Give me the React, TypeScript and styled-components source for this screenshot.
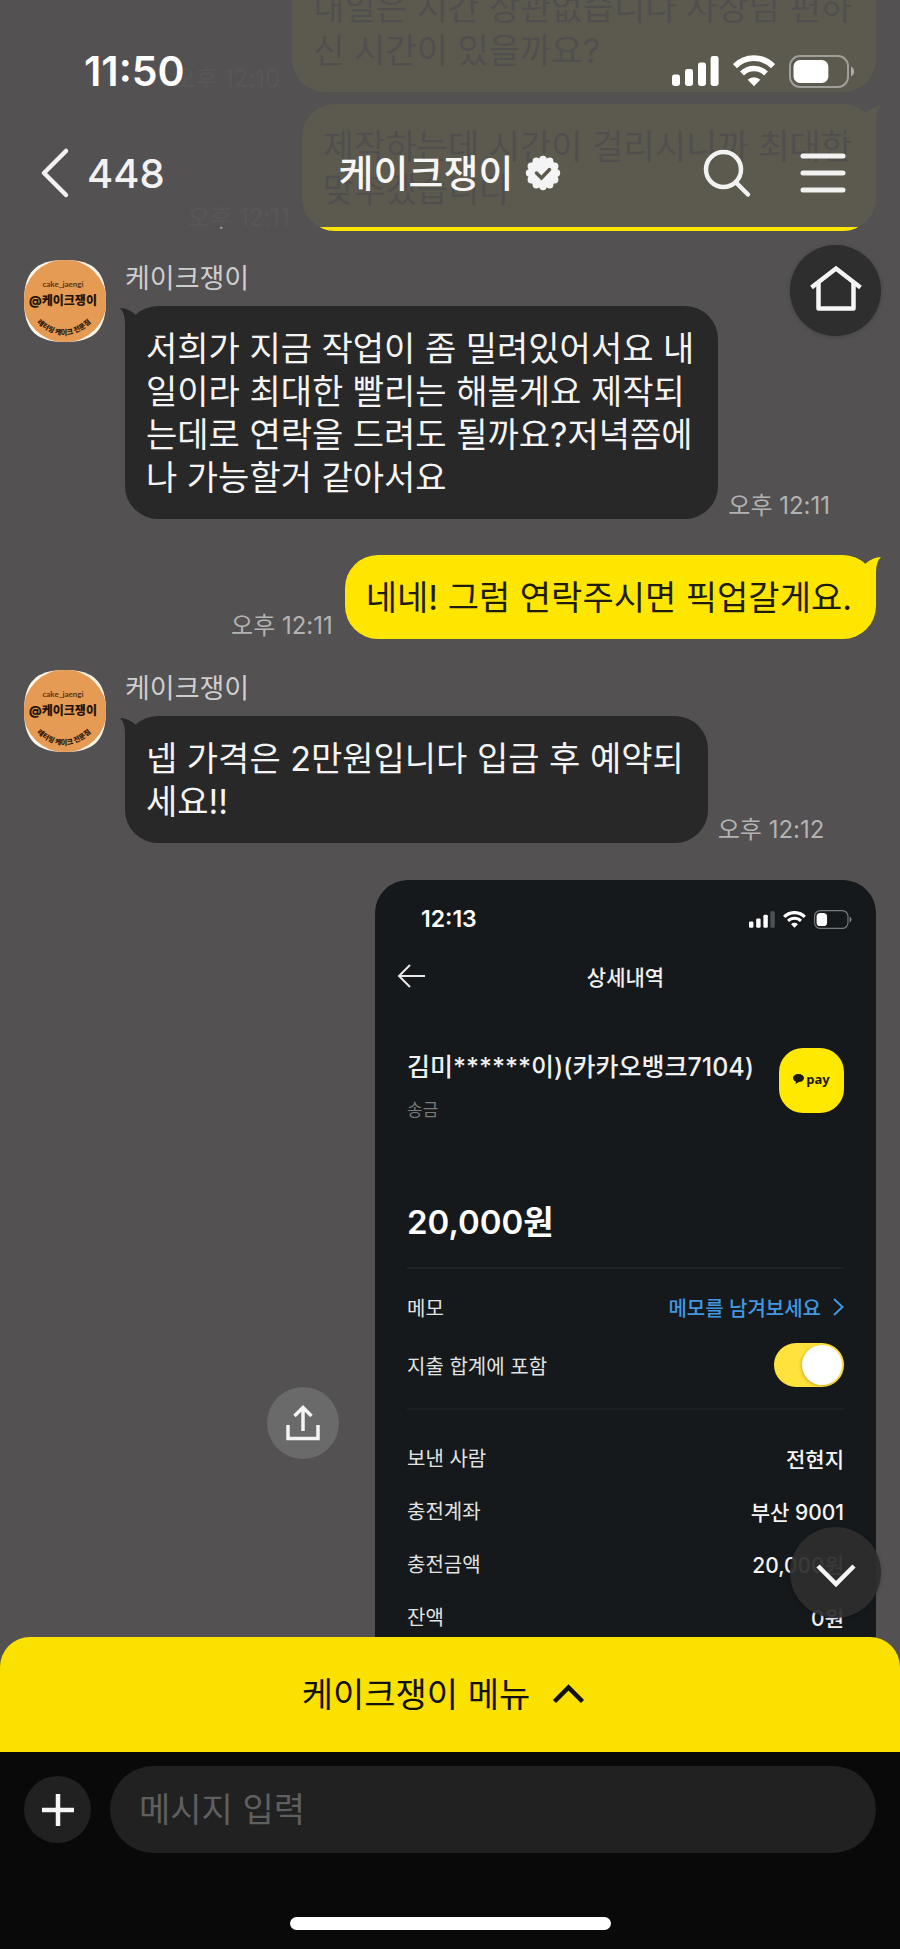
import React from "react";
import styled, { createGlobalStyle, css } from "styled-components";

const GlobalStyle = createGlobalStyle`
  *, *::before, *::after { box-sizing: border-box; }
  body {
    margin: 0;
    background: #535152;
    font-family: Inter, "Noto Sans CJK KR", sans-serif;
  }
  button, input { font-family: inherit; }
`;

/* ---------- page ---------- */

const Page = styled.div`
  position: relative;
  display: flex;
  flex-direction: column;
  height: 100vh;
  overflow: hidden;
  background: #535152;
`;

const iconButton = css`
  display: flex;
  align-items: center;
  justify-content: center;
  padding: 0;
  border: 0;
  background: none;
  color: #f2f2f2;
  cursor: pointer;
`;

/* ---------- header ---------- */

const Header = styled.header`
  position: absolute;
  top: 0;
  left: 0;
  right: 0;
  z-index: 2;
  padding: 41px 0 14px;
  background: rgba(83, 81, 82, 0.95);
`;

const StatusBar = styled.div`
  display: flex;
  align-items: center;
  justify-content: space-between;
  height: 60px;
  padding: 0 45px 0 84px;
`;

const Clock = styled.time`
  font-size: 41px;
  font-weight: 600;
  color: #fff;
`;

const StatusIcons = styled.div`
  display: flex;
  align-items: center;
  gap: 14px;
`;

const NavBar = styled.div`
  display: grid;
  grid-template-columns: 1fr auto 1fr;
  align-items: center;
  height: 80px;
  margin-top: 32px;
  padding: 0 52px 0 38px;
`;

const BackButton = styled.button`
  ${iconButton}
  justify-self: start;
  gap: 15px;
  font-size: 40px;
  font-weight: 500;
`;

const Title = styled.h1`
  display: flex;
  align-items: center;
  gap: 12px;
  margin: 0;
  padding-left: 14px;
  font-size: 38px;
  font-weight: 500;
  line-height: 56px;
  color: #f6f6f6;
`;

const NavActions = styled.div`
  display: flex;
  justify-self: end;
  gap: 46px;
`;

const IconButton = styled.button`
  ${iconButton}
`;

/* ---------- conversation ---------- */

const Stage = styled.main`
  position: relative;
  flex: 1;
  min-height: 0;
  margin-bottom: -30px;
  overflow: hidden;
`;

const Conversation = styled.div`
  display: flex;
  flex-direction: column;
  margin-top: -35px;
  padding: 0 24px;
`;

const Outgoing = styled.div<{ $gap: number }>`
  display: flex;
  flex-direction: row-reverse;
  align-items: flex-end;
  gap: 12px;
  margin-top: ${(p) => p.$gap}px;
`;

const Incoming = styled.div<{ $gap: number }>`
  display: grid;
  grid-template-columns: 82px 1fr;
  gap: 19px;
  margin-top: ${(p) => p.$gap}px;
`;

const Sender = styled.div`
  padding-top: 2px;
  margin-bottom: 10px;
  font-size: 27px;
  line-height: 34px;
  color: #cfcecf;
`;

const BubbleLine = styled.div`
  display: flex;
  align-items: flex-end;
  gap: 10px;
`;

const BubbleBox = styled.div<{ $mine?: boolean }>`
  position: relative;
  padding: 21px 24px 20px 21px;
  border-radius: 33px;
  background: ${(p) => (p.$mine ? "#ffe600" : "#282828")};
  color: ${(p) => (p.$mine ? "#1e1c0c" : "#f4f4f4")};
  font-size: 34px;
  line-height: 43px;
`;

const TextLine = styled.span`
  display: block;
  white-space: nowrap;
`;

const Tail = styled.svg<{ $mine?: boolean }>`
  position: absolute;
  top: 0;
  ${(p) => (p.$mine ? "right: -5px; transform: scaleX(-1);" : "left: -5px;")}
`;

const SentAt = styled.time`
  font-size: 24px;
  line-height: 26px;
  white-space: nowrap;
  color: #b4b3b3;
`;

const PhotoLine = styled.div`
  display: flex;
  align-items: center;
  justify-content: flex-end;
  gap: 36px;
  margin-top: 37px;
`;

const ShareButton = styled.button`
  ${iconButton}
  width: 72px;
  height: 72px;
  border-radius: 50%;
  background: #6b6a6a;
`;

const FloatingButton = styled.button<{ $place: "top" | "bottom" }>`
  ${iconButton}
  position: absolute;
  right: 19px;
  ${(p) => (p.$place === "top" ? "top: 245px;" : "bottom: 49px;")}
  width: 91px;
  height: 91px;
  border-radius: 50%;
  background: ${(p) => (p.$place === "top" ? "#2e2e2e" : "rgba(46, 46, 46, 0.94)")};
  box-shadow: 0 1px 4px rgba(0, 0, 0, 0.2);
`;

/* ---------- transfer receipt ---------- */

const Receipt = styled.article`
  width: 60%;
  max-width: 501px;
  aspect-ratio: 501 / 1085;
  padding: 24px 32px 0;
  border-radius: 33px;
  background: #15191b;
  color: #e2e3e3;
  font-size: 20px;
`;

const ReceiptStatus = styled.div`
  display: flex;
  align-items: center;
  justify-content: space-between;
  height: 30px;
  margin: 0 -8px 0 14px;
`;

const ReceiptClock = styled.time`
  font-size: 23px;
  font-weight: 600;
  color: #fff;
`;

const ReceiptIcons = styled.div`
  display: flex;
  align-items: center;
  gap: 8px;
`;

const ReceiptNav = styled.div`
  display: grid;
  grid-template-columns: 1fr auto 1fr;
  align-items: center;
  height: 40px;
  margin: 22px -10px 0;
`;

const ReceiptTitle = styled.h2`
  margin: 0;
  font-size: 21px;
  font-weight: 500;
  color: #f0f0f0;
`;

const Payee = styled.div`
  display: flex;
  justify-content: space-between;
  margin-top: 52px;
`;

const PayeeName = styled.div`
  font-size: 25px;
  font-weight: 500;
  line-height: 38px;
  white-space: nowrap;
  color: #f0f0f0;
`;

const PayeeKind = styled.div`
  margin-top: 12px;
  font-size: 17px;
  line-height: 24px;
  color: #77797a;
`;

const PayBadge = styled.div`
  display: flex;
  align-items: center;
  justify-content: center;
  gap: 2px;
  width: 65px;
  height: 65px;
  padding-bottom: 4px;
  border-radius: 24px;
  background: #ffe900;
  color: #1d1b16;
  font-family: "Open Sans", sans-serif;
  font-size: 13px;
  font-weight: 700;
`;

const Amount = styled.div`
  margin-top: 76px;
  font-size: 33px;
  font-weight: 600;
  line-height: 48px;
  color: #fff;
`;

const Divider = styled.hr`
  height: 2px;
  margin: 21px 0 0;
  border: 0;
  background: #1d2124;
`;

const Settings = styled.div`
  display: flex;
  flex-direction: column;
  gap: 14px;
  margin-top: 16px;
`;

const SettingRow = styled.div`
  display: flex;
  align-items: center;
  justify-content: space-between;
  height: 44px;
`;

const MemoLink = styled.a`
  display: flex;
  align-items: center;
  gap: 12px;
  color: #4298e0;
  font-weight: 500;
  text-decoration: none;
`;

const Toggle = styled.input`
  appearance: none;
  display: flex;
  align-items: center;
  justify-content: flex-end;
  width: 70px;
  height: 44px;
  margin: 0;
  padding: 2px;
  border-radius: 22px;
  background: #ffe23c;

  &::before {
    content: "";
    width: 40px;
    height: 40px;
    border-radius: 50%;
    background: #fff;
    box-shadow: -1px 1px 3px rgba(120, 90, 0, 0.35);
  }

  &:not(:checked) {
    justify-content: flex-start;
    background: #44484b;
  }
`;

const Details = styled.dl`
  margin: 21px 0 0;
`;

const DetailRow = styled.div`
  display: flex;
  align-items: center;
  justify-content: space-between;
  height: 53px;
`;

const DetailValue = styled.dd`
  margin: 0;
  font-size: 21px;
  font-weight: 500;
  color: #f4f4f4;
`;

/* ---------- footer ---------- */

const Footer = styled.footer`
  position: relative;
  z-index: 2;
`;

const MenuButton = styled.button`
  ${iconButton}
  gap: 20px;
  width: 100%;
  height: 115px;
  padding: 0 12px 4px 0;
  border-radius: 30px 30px 0 0;
  background: #fae100;
  color: #111;
  font-size: 34px;
`;

const Dock = styled.div`
  display: flex;
  flex-direction: column;
  align-items: center;
  padding: 14px 24px 19px;
  background: #090909;
`;

const Composer = styled.form`
  display: flex;
  align-items: center;
  gap: 19px;
  width: 100%;
`;

const AddButton = styled.button`
  ${iconButton}
  flex: none;
  width: 67px;
  height: 67px;
  border-radius: 50%;
  background: #212121;
`;

const MessageInput = styled.input`
  flex: 1;
  min-width: 0;
  height: 87px;
  padding: 0 29px;
  border: 0;
  border-radius: 44px;
  outline: 0;
  background: #212121;
  color: #f2f2f2;
  font-size: 34px;

  &::placeholder {
    color: #5f5f5f;
    opacity: 1;
  }
`;

const HomeIndicator = styled.div`
  width: 321px;
  max-width: 60%;
  height: 13px;
  margin-top: 64px;
  border-radius: 7px;
  background: #fff;
`;

/* ---------- drawings ---------- */

const Signal = ({ size, weak }: { size: number; weak?: boolean }) => (
  <svg width={size} height={Math.round((size * 30) / 47)} viewBox="0 0 47 30" fill="#fff" aria-hidden="true">
    <rect x="0" y="18.5" width="8" height="11.5" rx="2.4" />
    <rect x="13" y="13" width="8" height="17" rx="2.4" />
    <rect x="26" y="6.5" width="8" height="23.5" rx="2.4" />
    <rect x="38.6" y="0" width="8" height="30" rx="2.4" opacity={weak ? 0.25 : 1} />
  </svg>
);

const Wifi = ({ size }: { size: number }) => (
  <svg width={size} height={Math.round((size * 30) / 40)} viewBox="0 0 40 30" fill="none" stroke="#fff" aria-hidden="true">
    <path d="M1.8 10.4 A25.5 25.5 0 0 1 38.2 10.4" strokeWidth="5.6" />
    <path d="M8.6 17.4 A16 16 0 0 1 31.4 17.4" strokeWidth="5.2" />
    <path d="M20 29.5 L14 23.4 A8.5 8.5 0 0 1 26 23.4 Z" fill="#fff" stroke="none" />
  </svg>
);

const Battery = ({ size, level }: { size: number; level: number }) => (
  <svg width={size} height={Math.round(size / 2)} viewBox="0 0 66 33" fill="none" aria-hidden="true">
    <rect x="1" y="1" width="58" height="31" rx="10" stroke="#fff" strokeOpacity="0.42" strokeWidth="2" />
    <path d="M62 11.5 a5.6 5.6 0 0 1 0 10 Z" fill="#fff" fillOpacity="0.5" />
    <rect x="4.5" y="5" width={52 * level} height="23" rx="6.5" fill="#fff" />
  </svg>
);

const badgePoints = Array.from({ length: 12 }, (_, i) => {
  const a = (i * Math.PI) / 6;
  return { x: 18 + 13.5 * Math.cos(a), y: 18 + 13.5 * Math.sin(a) };
});

const VerifiedBadge = () => (
  <svg width="36" height="36" viewBox="0 0 36 36" role="img" aria-label="인증됨">
    <g fill="#f4f4f4">
      <circle cx="18" cy="18" r="15" />
      {badgePoints.map((p, i) => (
        <circle key={i} cx={p.x} cy={p.y} r="3.7" />
      ))}
    </g>
    <path d="M11.5 18 L16.5 23 L24.5 14.5" fill="none" stroke="#5c594c" strokeWidth="3.5" strokeLinecap="round" />
  </svg>
);

const Avatar = ({ id }: { id: string }) => (
  <svg width="82" height="82" viewBox="0 0 82 82" role="img" aria-label="케이크쟁이 프로필">
    <defs>
      <clipPath id={`${id}-clip`}>
        <path d="M41 0 C70 0 82 12 82 41 C82 70 70 82 41 82 C12 82 0 70 0 41 C0 12 12 0 41 0 Z" />
      </clipPath>
      <path id={`${id}-arc`} d="M10 60 Q40 90 70 60" />
    </defs>
    <g clipPath={`url(#${id}-clip)`}>
      <rect width="82" height="82" fill="#fdf6ea" />
      <circle cx="41" cy="41" r="41.5" fill="#e59b54" />
    </g>
    <text x="39" y="27" textAnchor="middle" fontFamily="Lato, sans-serif" fontSize="8" fontWeight="700" fill="#5a3417">
      cake_jaengi
    </text>
    <text x="39" y="45" textAnchor="middle" fontSize="12" fontWeight="900" fill="#24130a">
      @케이크쟁이
    </text>
    <text fontSize="7" fontWeight="800" fill="#2d180c" textAnchor="middle">
      <textPath href={`#${id}-arc`} startOffset="50%">
        레터링 케이크 전문점
      </textPath>
    </text>
  </svg>
);

/* ---------- parts ---------- */

const Bubble = ({ lines, mine, tail = true }: { lines: string[]; mine?: boolean; tail?: boolean }) => (
  <BubbleBox $mine={mine}>
    {tail && (
      <Tail $mine={mine} width="38" height="33" viewBox="-5 0 38 33" aria-hidden="true">
        <path d="M-5 2 Q3 2 11 9 L33 33 L0 33 L0 17 Q0 7 -5 2 Z" fill={mine ? "#ffe600" : "#282828"} />
      </Tail>
    )}
    {lines.map((line) => (
      <TextLine key={line}>{line}</TextLine>
    ))}
  </BubbleBox>
);

const ShopMessage = ({ id, gap, lines, time }: { id: string; gap: number; lines: string[]; time: string }) => (
  <Incoming $gap={gap}>
    <Avatar id={id} />
    <div>
      <Sender>케이크쟁이</Sender>
      <BubbleLine>
        <Bubble lines={lines} />
        <SentAt>{time}</SentAt>
      </BubbleLine>
    </div>
  </Incoming>
);

const details = [
  ["보낸 사람", "전현지"],
  ["충전계좌", "부산 9001"],
  ["충전금액", "20,000원"],
  ["잔액", "0원"],
];

const TransferReceipt = () => (
  <Receipt>
    <ReceiptStatus>
      <ReceiptClock>12:13</ReceiptClock>
      <ReceiptIcons>
        <Signal size={26} weak />
        <Wifi size={23} />
        <Battery size={38} level={0.35} />
      </ReceiptIcons>
    </ReceiptStatus>
    <ReceiptNav>
      <svg width="30" height="26" viewBox="0 0 30 26" fill="none" stroke="#e8e8e8" strokeWidth="2" aria-hidden="true">
        <path d="M28 13 H3 M13 2 L2 13 L13 24" />
      </svg>
      <ReceiptTitle>상세내역</ReceiptTitle>
    </ReceiptNav>
    <Payee>
      <div>
        <PayeeName>김미******이)(카카오뱅크7104)</PayeeName>
        <PayeeKind>송금</PayeeKind>
      </div>
      <PayBadge>
        <svg width="11" height="11" viewBox="0 0 11 11" fill="#1d1b16" aria-hidden="true">
          <path d="M5.5 1 C8.6 1 11 2.8 11 5.1 C11 7.4 8.6 9.2 5.5 9.2 L2.5 11 L3 8.7 C1.2 8 0 6.7 0 5.1 C0 2.8 2.4 1 5.5 1 Z" />
        </svg>
        pay
      </PayBadge>
    </Payee>
    <Amount>20,000원</Amount>
    <Divider />
    <Settings>
      <SettingRow>
        <span>메모</span>
        <MemoLink href="#memo">
          메모를 남겨보세요
          <svg width="11" height="18" viewBox="0 0 11 18" fill="none" stroke="#4298e0" strokeWidth="2" aria-hidden="true">
            <path d="M1 1 L9.5 9 L1 17" />
          </svg>
        </MemoLink>
      </SettingRow>
      <SettingRow>
        <label htmlFor="include-in-total">지출 합계에 포함</label>
        <Toggle id="include-in-total" type="checkbox" defaultChecked />
      </SettingRow>
    </Settings>
    <Divider />
    <Details>
      {details.map(([name, value]) => (
        <DetailRow key={name}>
          <dt>{name}</dt>
          <DetailValue>{value}</DetailValue>
        </DetailRow>
      ))}
    </Details>
  </Receipt>
);

export default function App() {
  return (
    <>
      <GlobalStyle />
      <Page>
        <Header>
          <StatusBar>
            <Clock>11:50</Clock>
            <StatusIcons>
              <Signal size={47} />
              <Wifi size={42} />
              <Battery size={66} level={0.67} />
            </StatusIcons>
          </StatusBar>
          <NavBar>
            <BackButton type="button" aria-label="뒤로, 읽지 않음 448">
              <svg width="34" height="52" viewBox="0 0 34 52" fill="none" stroke="#f2f2f2" strokeWidth="4.5" strokeLinecap="round" strokeLinejoin="round" aria-hidden="true">
                <path d="M28 4 L6 26 L28 48" />
              </svg>
              448
            </BackButton>
            <Title>
              케이크쟁이
              <VerifiedBadge />
            </Title>
            <NavActions>
              <IconButton type="button" aria-label="검색">
                <svg width="50" height="50" viewBox="0 0 50 50" fill="none" stroke="#f2f2f2" strokeWidth="4.5" strokeLinecap="round" aria-hidden="true">
                  <circle cx="21.5" cy="21.5" r="17.5" />
                  <path d="M34 34.5 L46 46.5" />
                </svg>
              </IconButton>
              <IconButton type="button" aria-label="메뉴">
                <svg width="50" height="50" viewBox="0 0 50 50" fill="none" stroke="#f2f2f2" strokeWidth="5" strokeLinecap="round" aria-hidden="true">
                  <path d="M5 8 H45 M5 25 H45 M5 42 H45" />
                </svg>
              </IconButton>
            </NavActions>
          </NavBar>
        </Header>

        <Stage>
          <Conversation>
            <Outgoing $gap={0}>
              <Bubble mine tail={false} lines={["내일은 시간 상관없습니다 사장님 편하", "신 시간이 있을까요?"]} />
              <SentAt>오후 12:10</SentAt>
            </Outgoing>
            <Outgoing $gap={12}>
              <Bubble mine lines={["제작하는데 시간이 걸리시니까 최대한", "맞추겠습니다"]} />
              <SentAt>오후 12:11</SentAt>
            </Outgoing>
            <ShopMessage
              id="shop-a"
              gap={29}
              lines={[
                "저희가 지금 작업이 좀 밀려있어서요 내",
                "일이라 최대한 빨리는 해볼게요 제작되",
                "는데로 연락을 드려도 될까요?저녁쯤에",
                "나 가능할거 같아서요",
              ]}
              time="오후 12:11"
            />
            <Outgoing $gap={36}>
              <Bubble mine lines={["네네! 그럼 연락주시면 픽업갈게요."]} />
              <SentAt>오후 12:11</SentAt>
            </Outgoing>
            <ShopMessage id="shop-b" gap={31} lines={["넵 가격은 2만원입니다 입금 후 예약되", "세요!!"]} time="오후 12:12" />
            <PhotoLine>
              <ShareButton type="button" aria-label="공유">
                <svg width="36" height="38" viewBox="0 0 36 38" fill="none" stroke="#f4f4f4" strokeWidth="3.5" aria-hidden="true">
                  <path d="M18 3 V27 M9.5 12 L18 3.5 L26.5 12 M3 21 V34.5 H33 V21" />
                </svg>
              </ShareButton>
              <TransferReceipt />
            </PhotoLine>
          </Conversation>
          <FloatingButton type="button" $place="top" aria-label="채널 홈">
            <svg width="54" height="54" viewBox="0 0 54 54" fill="none" stroke="#f6f6f6" strokeWidth="4.5" strokeLinejoin="round" aria-hidden="true">
              <path d="M2.5 23.5 L27 4.5 L51.5 23.5" strokeLinejoin="miter" />
              <path d="M9.5 19 V44.5 H44.5 V19" />
            </svg>
          </FloatingButton>
          <FloatingButton type="button" $place="bottom" aria-label="맨 아래로">
            <svg width="44" height="30" viewBox="0 0 44 30" fill="none" stroke="#f6f6f6" strokeWidth="4.5" aria-hidden="true">
              <path d="M4 8 L22 26 L40 8" />
            </svg>
          </FloatingButton>
        </Stage>

        <Footer>
          <MenuButton type="button">
            케이크쟁이 메뉴
            <svg width="36" height="26" viewBox="0 0 36 26" fill="none" stroke="#111" strokeWidth="4.5" aria-hidden="true">
              <path d="M4.5 21.5 L18.5 7.5 L32.5 21.5" />
            </svg>
          </MenuButton>
          <Dock>
            <Composer>
              <AddButton type="button" aria-label="추가">
                <svg width="34" height="34" viewBox="0 0 34 34" stroke="#f6f6f6" strokeWidth="4.5" aria-hidden="true">
                  <path d="M17 1 V33 M1 17 H33" />
                </svg>
              </AddButton>
              <MessageInput type="text" placeholder="메시지 입력" aria-label="메시지 입력" />
            </Composer>
            <HomeIndicator />
          </Dock>
        </Footer>
      </Page>
    </>
  );
}
